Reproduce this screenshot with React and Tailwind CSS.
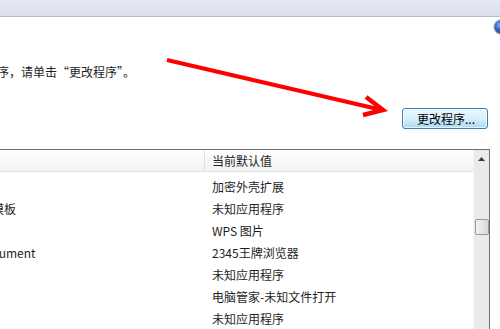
import React from 'react';

const rows = [
  { name: '', value: '加密外壳扩展' },
  { name: '模板', value: '未知应用程序' },
  { name: '', value: 'WPS 图片' },
  { name: 'Document', value: '2345王牌浏览器' },
  { name: '', value: '未知应用程序' },
  { name: '', value: '电脑管家-未知文件打开' },
  { name: '', value: '未知应用程序' },
];

function HelpIcon() {
  return (
    <svg width="16" height="16" viewBox="0 0 16 16" className="absolute right-[-9px] top-[2px]">
      <defs>
        <radialGradient id="hb" cx="0.4" cy="0.35" r="0.7">
          <stop offset="0" stopColor="#7fb0f5" />
          <stop offset="0.6" stopColor="#2a5fc9" />
          <stop offset="1" stopColor="#1b3f99" />
        </radialGradient>
      </defs>
      <circle cx="8" cy="8" r="7.5" fill="#9a9da3" />
      <circle cx="8" cy="8" r="6.3" fill="url(#hb)" />
    </svg>
  );
}

export default function App() {
  return (
    <div className="relative w-[500px] h-[329px] overflow-hidden bg-white text-[12px] text-[#1e1e1e]" style={{ fontFamily: '"Noto Sans CJK SC", "Noto Sans", sans-serif' }}>
      <div className="h-[17px] bg-gradient-to-b from-[#e6e9f4] to-[#d9deee] border-b border-[#b7bccb]" />
      <div className="relative">
        <HelpIcon />
        <div className="pt-[47px] leading-[16px] ml-[-3px]">序，请单击“更改程序”。</div>
        <div className="flex justify-end pr-[12px] mt-[28px]">
          <button className="w-[86px] h-[21px] rounded-[3px] border border-[#3c7fb1] bg-gradient-to-b from-[#eaf6fd] via-[#d9f0fc] to-[#a7d9f5] shadow-[inset_0_0_0_1px_#ffffffb0] text-[12px] leading-[17px] text-black pl-[2px]">
            更改程序...
          </button>
        </div>
        <div className="mt-[20px] w-[490px] h-[200px] border-t border-r border-[#6e6e6e] flex">
          <div className="flex-1 min-w-0 overflow-hidden">
            <div className="flex h-[22px] border-b border-[#dfe1e5] bg-gradient-to-b from-white to-[#f1f2f4]">
              <div className="w-[205px] border-r border-[#dfe1e5]" />
              <div className="pl-[7px] leading-[22px]">当前默认值</div>
            </div>
            <div className="pt-[4px]">
              {rows.map((r, i) => (
                <div key={i} className="flex h-[22px] leading-[22px]">
                  <div className="w-[205px] overflow-hidden whitespace-nowrap">
                    {r.name === '模板' && <span className="ml-[-8px]">{r.name}</span>}
                    {r.name === 'Document' && <span className="ml-[-23px]">{r.name}</span>}
                  </div>
                  <div className="pl-[7px] whitespace-nowrap">{r.value}</div>
                </div>
              ))}
            </div>
          </div>
          <div className="w-[16px] bg-[#eaeaea] border-l border-[#f5f5f5] flex flex-col items-center">
            <svg width="7" height="4" viewBox="0 0 7 4" className="mt-[7px]">
              <path d="M0 4 L3.5 0 L7 4 Z" fill="#3a3a3a" />
            </svg>
            <div className="mt-[58px] w-[14px] h-[16px] rounded-[2px] border border-[#979797] bg-gradient-to-r from-[#f3f3f3] to-[#d8d8d8]" />
          </div>
        </div>
      </div>
      <svg className="absolute left-0 top-0 pointer-events-none" width="500" height="329">
        <g stroke="#ff0000" strokeWidth="4" fill="none" strokeLinejoin="miter">
          <line x1="167" y1="60" x2="382" y2="110" />
          <polyline points="366,97 383,110 363,115" strokeWidth="4.5" />
        </g>
      </svg>
    </div>
  );
}
